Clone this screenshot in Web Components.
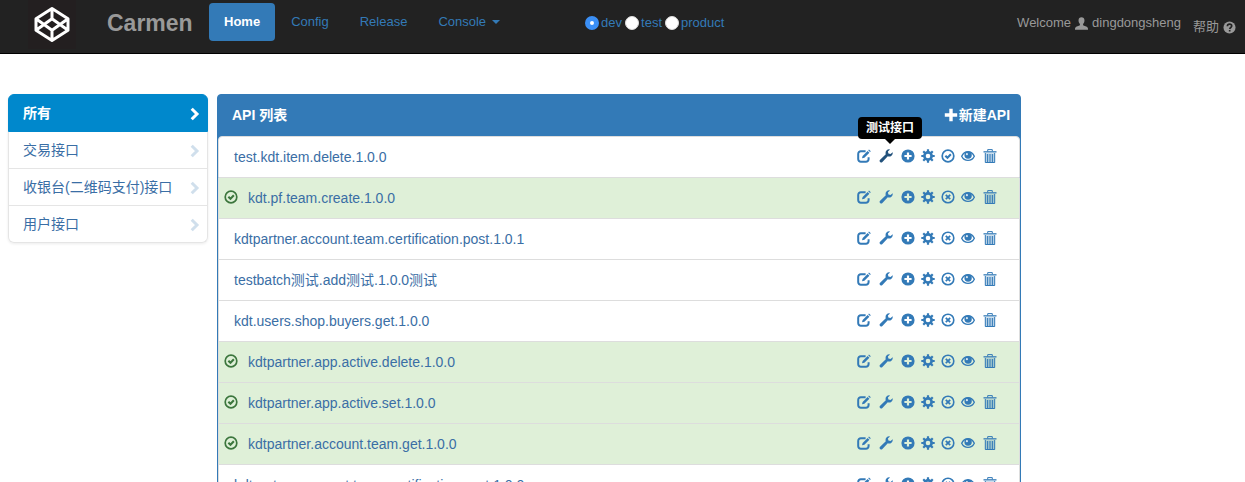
<!DOCTYPE html>
<html lang="zh-CN">
<head>
<meta charset="utf-8">
<meta name="viewport" content="width=device-width, initial-scale=1">
<title>Carmen</title>
<style>
  html { scrollbar-width: none; }
  body {
    margin: 0;
    height: 100vh;
    overflow: hidden auto;
    scrollbar-width: none;
    background: #fff;
    color: #333;
    font: 14px/20px "Liberation Sans", "Noto Sans CJK SC", sans-serif;
    --link: #337ab7;
    --line: #ddd;
  }
</style>
</head>
<body>
<carmen-app></carmen-app>

<script>
const define = (name, html, setup) => {
  const template = document.createElement('template');
  template.innerHTML = html;
  customElements.define(name, class extends HTMLElement {
    constructor() {
      super();
      this.attachShadow({ mode: 'open' }).append(template.content.cloneNode(true));
    }
    connectedCallback() {
      if (setup && !this.ready) { this.ready = true; setup(this, this.shadowRoot); }
    }
  });
};

/* Glyphs on a 14-unit grid, painted in the current text colour. */
const GLYPHS = {
  edit: '<path d="M8.600 2.300H3.800A2.600 2.600 0 0 0 1.200 4.900v5.200a2.600 2.600 0 0 0 2.600 2.600h5.200a2.600 2.600 0 0 0 2.600-2.600V8.200" fill="none" stroke="currentColor" stroke-width="2"/><path d="M5 9.300l.6-2.400 5-5 1.800 1.800-5 5zM11.200 1.300l.8-.8 1.800 1.800-.8.800z"/>',
  wrench: '<path d="M13.700 3.200a3.700 3.700 0 0 1-4.900 4.100L3.400 13a1.500 1.500 0 0 1-2.300-2.200l5.700-5.500A3.700 3.700 0 0 1 11 .4L8.900 2.500l.5 2.100 2.100.5z"/>',
  plusCircle: '<path fill-rule="evenodd" d="M7 .4a6.600 6.600 0 1 0 0 13.200A6.600 6.600 0 0 0 7 .4zM5.900 3.400h2.200v2.500h2.500v2.200H8.100v2.500H5.900V8.100H3.400V5.900h2.500z"/>',
  gear: '<circle cx="7" cy="7" r="3.600" fill="none" stroke="currentColor" stroke-width="2.600"/><path d="M7 .3v2.600M7 11.100v2.600M.3 7h2.600M11.100 7h2.600M2.260 2.260l1.900 1.900M9.840 9.840l1.900 1.900M2.260 11.740l1.900-1.900M9.840 4.160l1.900-1.900" stroke="currentColor" stroke-width="2.200"/>',
  check: '<circle cx="7" cy="7" r="5.800" fill="none" stroke="currentColor" stroke-width="1.700"/><path d="M3.600 7.400l1.500-1.500 1.400 1.400 2.600-2.700 1.500 1.500-4.100 4.200z"/>',
  cross: '<circle cx="7" cy="7" r="5.800" fill="none" stroke="currentColor" stroke-width="1.600"/><path d="M4.800 4.800l4.400 4.400M9.200 4.800l-4.400 4.400" stroke="currentColor" stroke-width="1.800"/>',
  eye: '<path d="M.7 7.200C2 4.400 4.300 2.700 7 2.700s5 1.700 6.300 4.500C12 9.900 9.700 11.400 7 11.400S2 9.900.7 7.200z" fill="none" stroke="currentColor" stroke-width="1.400"/><circle cx="7.100" cy="6.100" r="3.700"/><circle cx="5.900" cy="5.200" r="1.100" fill="#fff" opacity=".8"/>',
  trash: '<path d="M.5 2.200h13v1.300H.5z"/><path d="M4.700 2.400V.6h4.600v1.800" fill="none" stroke="currentColor" stroke-width="1"/><path d="M2 4.300h10v9.600H2z" opacity=".35"/><path d="M2.300 4v9.500h9.400V4M4.600 5v8M7 5v8M9.400 5v8" fill="none" stroke="currentColor" stroke-width="1"/>',
  plus: '<path d="M5.300.8h3.400v4.500h4.500v3.400H8.700v4.500H5.300V8.700H.8V5.300h4.500z"/>',
  user: '<path d="M7 .4c2 0 3.200 1.400 3.200 3.300 0 1.500-.6 2.900-1.500 3.800v1.400c1.200.7 4.200 1.300 5 2.600.3.500.3 1.200.3 2.100H0c0-.9 0-1.600.3-2.100.8-1.300 3.800-1.900 5-2.600V7.500c-.9-.9-1.500-2.300-1.500-3.800C3.800 1.800 5 .4 7 .4z"/>',
  help: '<circle cx="7" cy="7" r="6.500"/><path d="M4.700 5.700c0-1.500 1-2.300 2.400-2.300s2.300.8 2.300 2c0 1.600-1.900 1.500-2.200 3.200M7.200 9.700v1.700" fill="none" stroke="#222" stroke-width="1.800"/>',
  chevron: '<path d="M4.700 1.700L10 7l-5.300 5.300" fill="none" stroke="currentColor" stroke-width="3"/>'
};

define('glyph-icon', `
  <style>
    :host { display: inline-block; width: 14px; height: 14px; flex: none; }
    svg { display: block; width: 100%; height: 100%; fill: currentColor; }
  </style>
  <svg viewBox="0 0 14 14" aria-hidden="true"></svg>`,
  (el, root) => { root.querySelector('svg').innerHTML = GLYPHS[el.getAttribute('name')]; });

define('nav-link', `
  <style>
    :host { display: block; }
    a {
      display: flex; align-items: center; gap: 6px;
      padding: 9px 15px; border-radius: 4px;
      color: var(--link); font-size: 13px; line-height: 20px; text-decoration: none;
    }
    :host([active]) a { background: var(--link); color: #fff; font-weight: bold; }
    i { display: none; border: 4px solid transparent; border-top-color: currentColor; border-bottom: 0; }
    :host([menu]) i { display: block; }
  </style>
  <a href="#"><slot></slot><i></i></a>`);

define('env-picker', `
  <style>
    :host { display: flex; gap: 3px; color: var(--link); font-size: 13px; line-height: 20px; }
    label { display: flex; align-items: center; gap: 2px; }
    input {
      appearance: none; box-sizing: border-box; width: 14px; height: 14px; margin: 0;
      border-radius: 50%; background: #fff; border: 1px solid #ddd;
    }
    input:checked { background: #fff; border: 5px solid #3b8ff5; }
  </style>
  <label><input type="radio" name="env" value="dev" checked>dev</label>
  <label><input type="radio" name="env" value="test">test</label>
  <label><input type="radio" name="env" value="product">product</label>`);

define('nav-bar', `
  <style>
    :host {
      display: flex; align-items: flex-start; height: 53px;
      background: #222; border-bottom: 1px solid #000; color: #999;
    }
    .logo { display: block; width: 48px; height: 49px; margin-left: 28px; background: #231f20; }
    .logo svg { display: block; }
    .brand { margin-left: 31px; padding-top: 8px; width: 102px; font-size: 23px; line-height: 30px; font-weight: bold; color: #999; text-decoration: none; }
    nav { display: flex; gap: 1px; padding-top: 3px; }
    env-picker { margin-left: 70px; padding-top: 13px; }
    .account { display: flex; align-items: flex-start; margin-left: auto; padding: 13px 9px 0 0; gap: 12px; font-size: 13px; line-height: 20px; }
    .account > * { display: flex; align-items: center; gap: 4px; }
    .account a { padding-top: 4px; color: inherit; text-decoration: none; }
    .account glyph-icon { width: 13px; height: 13px; }
  </style>
  <a class="logo" href="#" aria-label="Home">
    <svg width="48" height="49" viewBox="0 0 48 49" fill="none" stroke="#fff" stroke-width="3" stroke-linejoin="round">
      <path d="M24 8.500L40 18.800v11.400L24 40.500 8 30.200V18.800zM24 8.500v10.300M24 30.200v10.300M8 18.800l16 11.400 16-11.400M8 30.200l16-11.400 16 11.400"/>
    </svg>
  </a>
  <a class="brand" href="#">Carmen</a>
  <nav>
    <nav-link active>Home</nav-link>
    <nav-link>Config</nav-link>
    <nav-link>Release</nav-link>
    <nav-link menu>Console</nav-link>
  </nav>
  <env-picker></env-picker>
  <div class="account">
    <span>Welcome <glyph-icon name="user"></glyph-icon> dingdongsheng</span>
    <a href="#">帮助 <glyph-icon name="help"></glyph-icon></a>
  </div>`);

define('side-item', `
  <style>
    :host { display: block; border: 1px solid #e5e5e5; border-top-width: 0; }
    :host(:first-of-type) { border-radius: 6px 6px 0 0; }
    :host(:last-of-type) { border-radius: 0 0 6px 6px; }
    a {
      display: flex; align-items: center; justify-content: space-between;
      padding: 8px 6px 8px 14px; color: #3a6ea5; text-decoration: none;
    }
    glyph-icon { color: #d0dfec; padding-top: 2px; }
    :host([active]) { background: #08c; border-color: #08c; border-top-width: 1px; }
    :host([active]) a { color: #fff; font-weight: bold; }
    :host([active]) glyph-icon { color: #fff; }
  </style>
  <a href="#"><slot></slot><glyph-icon name="chevron"></glyph-icon></a>`);

define('side-list', `
  <style>
    :host { display: block; border-radius: 6px; box-shadow: 0 1px 3px rgba(0, 0, 0, .08); }
  </style>
  <slot></slot>`);

define('icon-action', `
  <style>
    :host { display: block; position: relative; }
    button {
      display: block; margin: 0; padding: 0 6px 0 0; border: 0; background: none;
      color: var(--link); cursor: pointer;
    }
    :host([wide]) button { padding-right: 8px; }
    :host([tip]) button { color: #23527c; }
    .tip {
      position: absolute; z-index: 1; left: 50%; bottom: 100%;
      transform: translateX(-50%); margin-bottom: 10px; padding: 1px 8px;
      border-radius: 4px; background: #000; color: #fff;
      font-size: 12px; line-height: 20px; font-weight: bold; white-space: nowrap;
    }
    .tip::after {
      content: ""; position: absolute; top: 100%; left: 50%; margin-left: -5px;
      border: 5px solid transparent; border-top-color: #000; border-bottom: 0;
    }
  </style>
  <button type="button"></button>
  <span class="tip" role="tooltip"></span>`,
  (el, root) => {
    const icon = document.createElement('glyph-icon');
    icon.setAttribute('name', el.getAttribute('icon'));
    root.querySelector('button').append(icon);
    root.querySelector('button').setAttribute('aria-label', el.getAttribute('label'));
    if (el.hasAttribute('tip')) root.querySelector('.tip').textContent = el.getAttribute('label');
    else root.querySelector('.tip').remove();
  });

customElements.define('api-row', class extends HTMLElement {
  connectedCallback() {
    if (this.shadowRoot) return;
    const passed = this.hasAttribute('passed');
    const tip = this.hasAttribute('tip') ? 'tip' : '';
    const state = this.hasAttribute('pending') ? 'check' : 'cross';
    this.attachShadow({ mode: 'open' }).innerHTML = `
      <style>
        :host { display: flex; align-items: center; padding: 10px 14px 10px 15px; border: 1px solid var(--line); border-top: 0; background: #fff; }
        :host(:first-of-type) { border-top: 1px solid var(--line); border-radius: 4px 4px 0 0; }
        :host([passed]) { padding-left: 5px; background: #dff0d8; }
        .mark { color: #3c763d; margin: 0 10px 2px 0; }
        a { flex: 1; color: #3a6ea5; text-decoration: none; }
        .actions { display: flex; }
      </style>
      ${passed ? '<glyph-icon class="mark" name="check"></glyph-icon>' : ''}
      <a href="#"><slot></slot></a>
      <div class="actions">
        <icon-action wide icon="edit" label="编辑"></icon-action>
        <icon-action wide icon="wrench" label="测试接口" ${tip}></icon-action>
        <icon-action icon="plusCircle" label="添加"></icon-action>
        <icon-action icon="gear" label="设置"></icon-action>
        <icon-action icon="${state}" label="状态"></icon-action>
        <icon-action wide icon="eye" label="查看"></icon-action>
        <icon-action wide icon="trash" label="删除"></icon-action>
      </div>`;
  }
});

define('api-panel', `
  <style>
    :host { display: block; border: 1px solid var(--link); border-radius: 4px; background: var(--link); }
    header {
      display: flex; justify-content: space-between; align-items: center;
      padding: 10px 10px 11px 14px; color: #fff; font-weight: bold;
    }
    h1 { margin: 0; font-size: 14px; line-height: 20px; }
    a { display: flex; align-items: center; gap: 1px; color: #fff; text-decoration: none; }
  </style>
  <header>
    <h1>API 列表</h1>
    <a href="#"><glyph-icon name="plus"></glyph-icon>新建API</a>
  </header>
  <slot></slot>`);

define('carmen-app', `
  <style>
    :host { display: block; }
    main {
      display: grid; grid-template-columns: 200px 65%; gap: 9px;
      align-items: start; padding: 40px 0 20px 8px;
    }
  </style>
  <nav-bar></nav-bar>
  <main>
    <side-list>
      <side-item active>所有</side-item>
      <side-item>交易接口</side-item>
      <side-item>收银台(二维码支付)接口</side-item>
      <side-item>用户接口</side-item>
    </side-list>
    <api-panel>
      <api-row pending tip>test.kdt.item.delete.1.0.0</api-row>
      <api-row passed>kdt.pf.team.create.1.0.0</api-row>
      <api-row>kdtpartner.account.team.certification.post.1.0.1</api-row>
      <api-row>testbatch测试.add测试.1.0.0测试</api-row>
      <api-row>kdt.users.shop.buyers.get.1.0.0</api-row>
      <api-row passed>kdtpartner.app.active.delete.1.0.0</api-row>
      <api-row passed>kdtpartner.app.active.set.1.0.0</api-row>
      <api-row passed>kdtpartner.account.team.get.1.0.0</api-row>
      <api-row>kdtpartner.account.team.certification.post.1.0.0</api-row>
    </api-panel>
  </main>`);
</script>
</body>
</html>
